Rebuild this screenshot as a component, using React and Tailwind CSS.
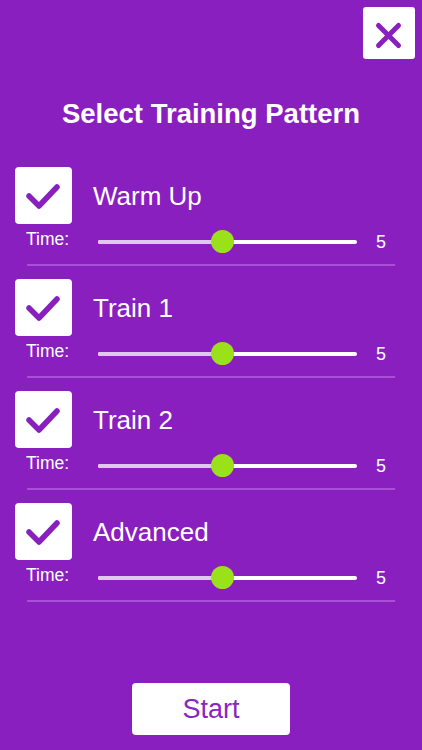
import React from 'react';

const patterns = [
  { name: 'Warm Up', time: 5 },
  { name: 'Train 1', time: 5 },
  { name: 'Train 2', time: 5 },
  { name: 'Advanced', time: 5 },
];

const Check = () => (
  <svg width="57" height="57" viewBox="0 0 57 57">
    <polyline
      points="14,29 24,39 42,20"
      fill="none"
      stroke="#8a1fc0"
      strokeWidth="5.5"
      strokeLinecap="round"
      strokeLinejoin="round"
    />
  </svg>
);

const PatternRow = ({ name, time }) => {
  // thumb position in percent of the track
  const pct = 48;
  return (
    <div className="flex flex-col">
      <div className="flex items-center">
        <div className="ml-[15px] w-[57px] h-[57px] bg-white rounded-[4px] flex items-center justify-center">
          <Check />
        </div>
        <div className="ml-[21px] text-[26px] text-white leading-none">{name}</div>
      </div>

      {/* Time slider */}
      <div className="flex items-center h-[23px] mt-[6px]">
        <div className="pl-[26px] w-[98px] text-[17.5px] text-white leading-none -mt-[3px]">Time:</div>
        <div className="relative w-[259px] h-[23px] flex items-center">
          <div className="w-full h-[4px] rounded-full bg-white flex">
            <div className="h-full rounded-l-full bg-[#ddc9ec]" style={{ width: `${pct}%` }} />
          </div>
          <div
            className="absolute top-0 w-[23px] h-[23px] rounded-full bg-[#9be11b]"
            style={{ left: `calc(${pct}% - 11.5px)` }}
          />
        </div>
        <div className="ml-[19px] text-[18px] text-white leading-none">{time}</div>
      </div>

      <div className="ml-[27px] w-[368px] h-[2px] bg-[#a74fd6] mt-[11px] mb-[13px]" />
    </div>
  );
};

export default function App() {
  return (
    <div
      className="w-full h-[750px] bg-[#8a1fc0] flex flex-col"
      style={{ fontFamily: '"Liberation Sans", Arial, sans-serif' }}
    >
      <div className="flex justify-end pt-[7px] pr-[7px]">
        <button className="w-[52px] h-[52px] bg-white rounded-[3px] flex items-center justify-center">
          <svg width="52" height="52" viewBox="0 0 52 52">
            <line x1="15.5" y1="18.5" x2="35.5" y2="38.5" stroke="#8a1fc0" strokeWidth="5" strokeLinecap="round" />
            <line x1="35.5" y1="18.5" x2="15.5" y2="38.5" stroke="#8a1fc0" strokeWidth="5" strokeLinecap="round" />
          </svg>
        </button>
      </div>

      <h1 className="mt-[38px] h-[34px] leading-[34px] text-center text-white text-[27.5px] font-bold">
        Select Training Pattern
      </h1>

      <div className="mt-[36px] flex flex-col">
        {patterns.map((p) => (
          <PatternRow key={p.name} name={p.name} time={p.time} />
        ))}
      </div>

      <div className="flex-1" />

      <div className="flex justify-center mb-[15px]">
        <button className="w-[158px] h-[52px] bg-white rounded-[4px] text-[#8a25bf] text-[27px] leading-none">
          Start
        </button>
      </div>
    </div>
  );
}
